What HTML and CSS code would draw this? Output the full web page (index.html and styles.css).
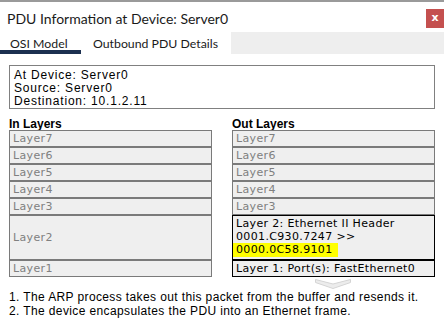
FILE: index.html
```html
<!DOCTYPE html>
<html>
<head>
<meta charset="utf-8">
<link rel="stylesheet" href="styles.css">
</head>
<body>
<div class="topline"></div>
<div class="titlebar">
  <div class="title">PDU Information at Device: Server0</div>
  <div class="close">x</div>
</div>
<div class="tabs">
  <div class="tab active">OSI Model</div>
  <div class="tab">Outbound PDU Details</div>
  <div class="tab-fill"></div>
</div>
<div class="content">
  <div class="info">
    <div>At Device: Server0</div>
    <div>Source: Server0</div>
    <div>Destination: 10.1.2.11</div>
  </div>
  <div class="layers">
    <div class="head">In Layers</div>
    <div class="head">Out Layers</div>
    <div class="layer">Layer7</div>
    <div class="layer">Layer7</div>
    <div class="layer">Layer6</div>
    <div class="layer">Layer6</div>
    <div class="layer">Layer5</div>
    <div class="layer">Layer5</div>
    <div class="layer">Layer4</div>
    <div class="layer">Layer4</div>
    <div class="layer">Layer3</div>
    <div class="layer">Layer3</div>
    <div class="layer center">Layer2</div>
    <div class="layer active multi">
      <div>Layer 2: Ethernet II Header</div>
      <div>0001.C930.7247 &gt;&gt;</div>
      <div><span class="hl">0000.0C58.9101</span></div>
    </div>
    <div class="layer">Layer1</div>
    <div class="layer active">Layer 1: Port(s): FastEthernet0</div>
  </div>
  <div class="arrow-row">
    <svg class="chev" width="36" height="10" viewBox="0 0 36 10">
      <polygon points="0.5,0.5 18,5 35.5,0.5 35.5,3.5 18,9.5 0.5,3.5" fill="#ececec" stroke="#d4d4d4" stroke-width="1"/>
    </svg>
  </div>
  <div class="desc">
    <div>1. The ARP process takes out this packet from the buffer and resends it.</div>
    <div>2. The device encapsulates the PDU into an Ethernet frame.</div>
  </div>
</div>
</body>
</html>
```

FILE: styles.css
```css
* { box-sizing: border-box; }
html, body { margin: 0; padding: 0; background: #fff; }
body {
  width: 444px;
  height: 335px;
  overflow: hidden;
  font-family: "DejaVu Sans", sans-serif;
  color: #000;
}
.topline { height: 2px; background: #9a9a9a; }
.titlebar {
  display: flex;
  justify-content: space-between;
  align-items: flex-start;
  height: 30px;
}
.title {
  margin: 8px 0 0 7px;
  font-family: Lato, "Liberation Sans", sans-serif;
  font-size: 14px;
  line-height: 18px;
  color: #1a1a1a;
}
.close {
  margin-top: 7px;
  width: 18px;
  height: 19px;
  background: #c4504f;
  color: #fff;
  font-family: "DejaVu Sans", sans-serif;
  font-weight: bold;
  font-size: 11px;
  line-height: 18px;
  text-align: center;
}
.tabs {
  display: flex;
  height: 23px;
}
.tab {
  height: 22px;
  font-family: Lato, "Liberation Sans", sans-serif;
  font-size: 12.3px;
  line-height: 18px;
  padding-top: 3px;
  color: #1a1a1a;
}
.tab.active {
  width: 81px;
  padding-left: 10px;
  border-bottom: 4px solid #1c3050;
}
.tab:nth-child(2) { width: 150px; padding-left: 12px; }
.tab-fill { flex: 1; height: 22px; background: #eeeeee; }
.content { padding: 0 9px; }
.info {
  margin-top: 10px;
  height: 44px;
  border: 1px solid #808080;
  padding: 3px 0 0 4px;
  font-family: "Liberation Sans", Arial, sans-serif;
  font-size: 12px;
  letter-spacing: 0.8px;
  line-height: 13px;
}
.layers {
  display: grid;
  grid-template-columns: 203px 203px;
  column-gap: 20px;
  margin-top: 9px;
}
.head {
  font-family: "Liberation Sans", Arial, sans-serif;
  font-weight: bold;
  font-size: 12px;
  line-height: 12px;
}
.layer {
  border: 1px solid #7a7a7a;
  background: #efefef;
  color: #808080;
  font-size: 11px;
  letter-spacing: 0.35px;
  line-height: 15px;
  padding-left: 3px;
  min-height: 17px;
  white-space: nowrap;
}
.layer.center { display: flex; align-items: center; }
.layer.active { border-color: #000; color: #000; }
.layer.multi { line-height: 13px; padding-top: 1px; padding-bottom: 2px; }
.hl {
  display: inline-block;
  background: #ffff00;
  margin-left: -3px;
  padding: 0 5px 0 3px;
  line-height: 14px;
}
.arrow-row {
  height: 10px;
  margin-top: 2px;
  padding-left: 306px;
}
.chev { display: block; }
.desc {
  margin-top: 1px;
  font-family: "Liberation Sans", Arial, sans-serif;
  font-size: 12px;
  letter-spacing: 0.38px;
  line-height: 14px;
}
```
